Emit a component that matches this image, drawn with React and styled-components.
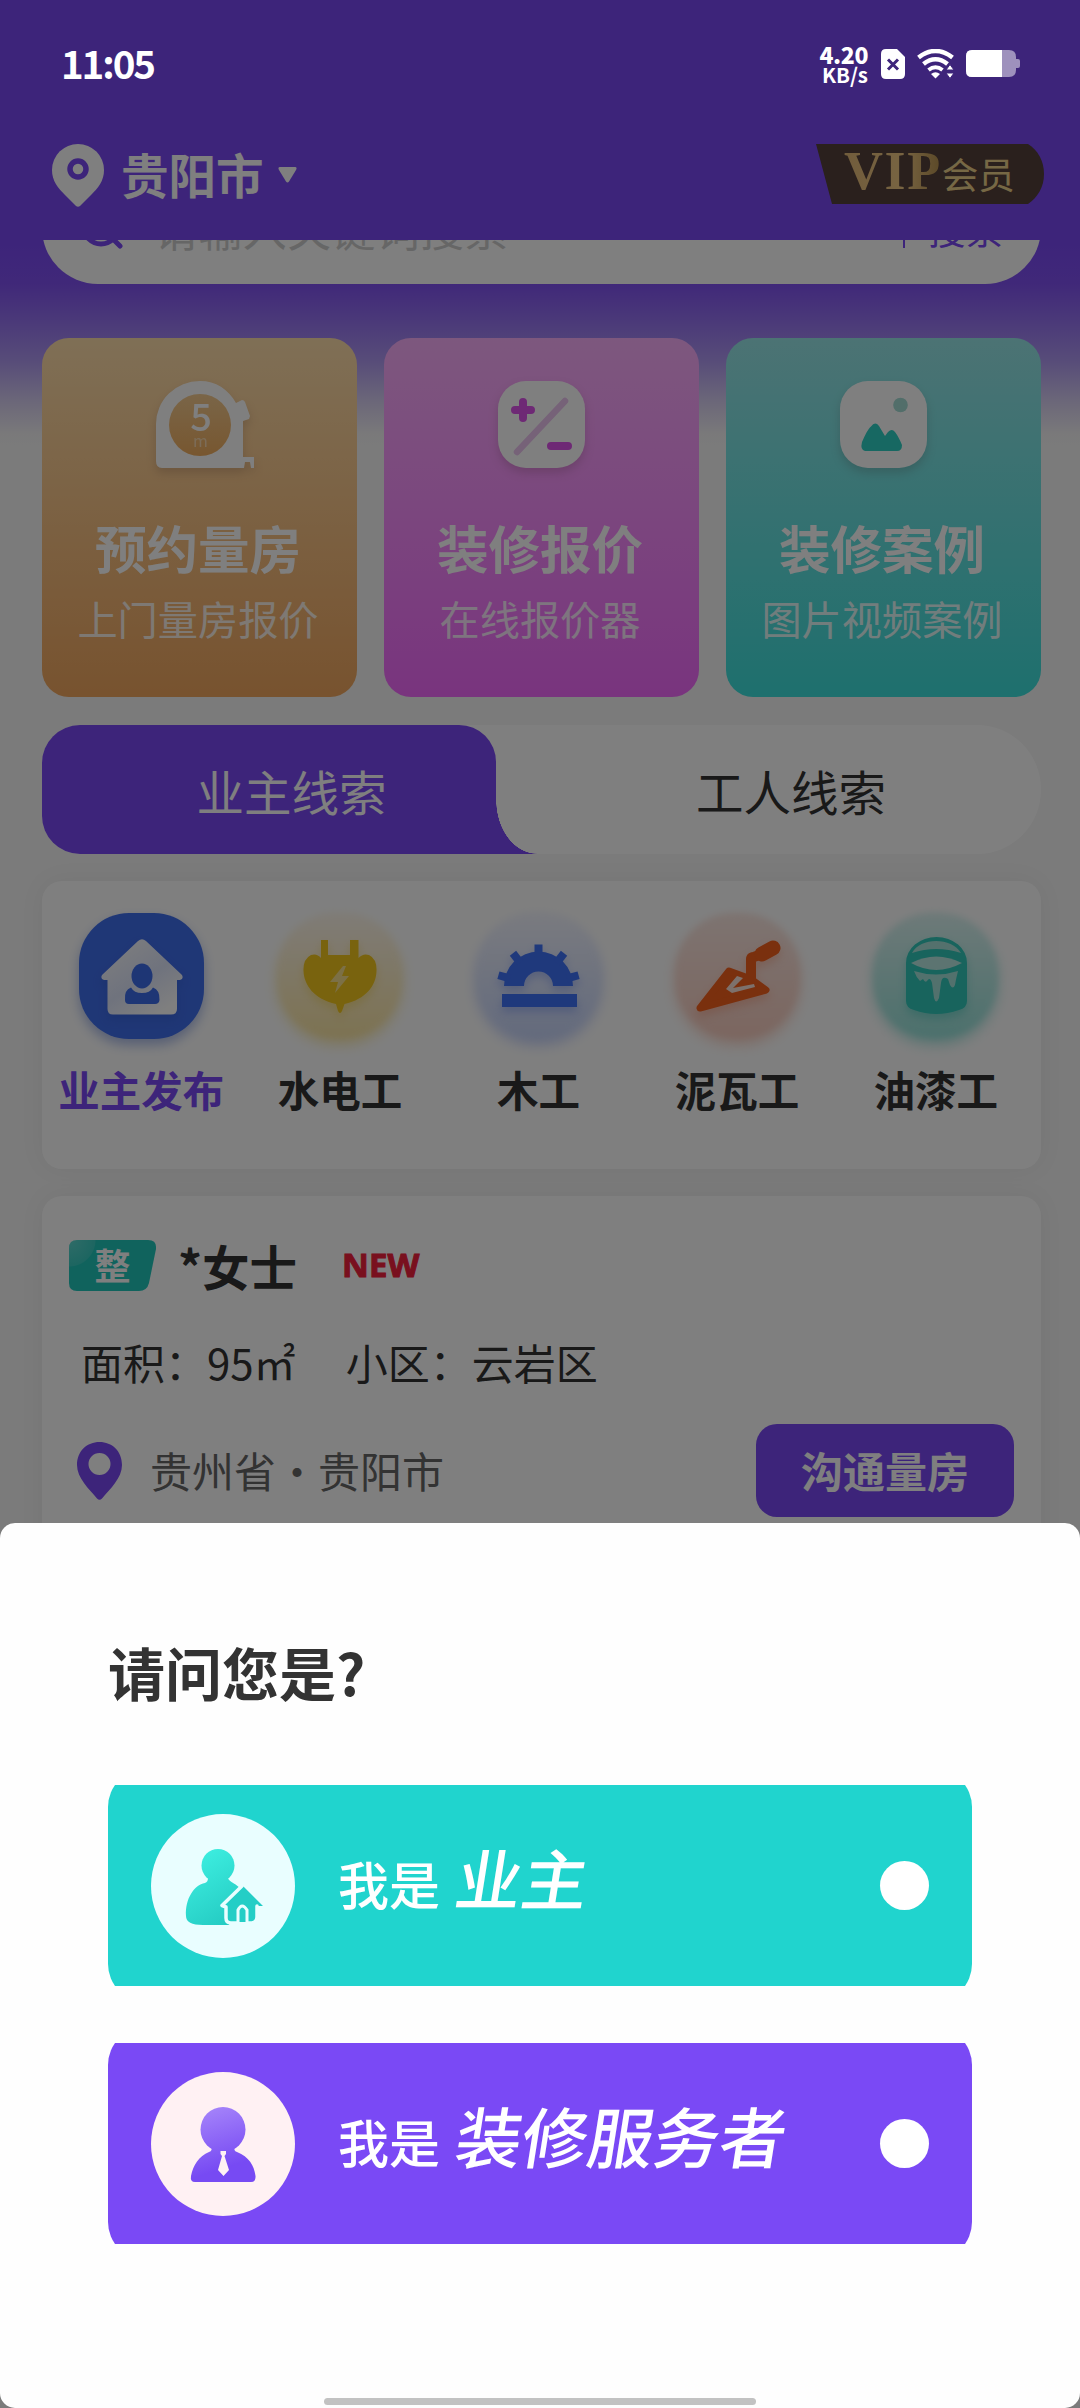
import styled, { createGlobalStyle, css } from "styled-components";

const PURPLE = "#7a48f5";

const GlobalStyle = createGlobalStyle`
  * {
    box-sizing: border-box;
  }

  body {
    margin: 0;
    font-family: "Noto Sans CJK SC", sans-serif;
    -webkit-font-smoothing: antialiased;
  }
`;

const Screen = styled.div`
  position: relative;
  width: 1080px;
  height: 2408px;
  overflow: hidden;
  background: #f6f6f6;
`;

/* header */

const Header = styled.header`
  height: 240px;
  padding: 110px 36px 0 52px;
  display: flex;
  align-items: center;
  justify-content: space-between;
  background: ${PURPLE};
  color: #fff;
`;

const City = styled.div`
  display: flex;
  align-items: center;
  font-size: 47.5px;
  font-weight: 700;
  line-height: 64px;

  svg:first-child {
    margin-right: 17px;
  }

  svg:last-child {
    margin: 0 0 0 14px;
  }
`;

const CityName = styled.span`
  margin-top: -3px;
`;

const VipBadge = styled.div`
  width: 228px;
  height: 60px;
  margin-bottom: 2px;
  padding-left: 28px;
  display: flex;
  align-items: center;
  background: #54403a;
  clip-path: path("M0 0 H212 C222 6 228 17 228 30 C228 43 222 53 212 60 H16 Z");
  color: #ecd08a;
  font-size: 36.5px;
  line-height: 60px;
`;

const VipLetters = styled.span`
  margin: -7px 0 0 0;
  font-family: "Liberation Serif", serif;
  font-size: 54px;
  font-weight: 700;
  letter-spacing: 1.6px;
  background: linear-gradient(90deg, #e2b978, #f0c884 60%, #b5904e);
  background-clip: text;
  color: transparent;
`;

/* scrolled page content */

const Content = styled.main`
  height: 1290px;
  overflow: hidden;
  background: linear-gradient(
    180deg,
    ${PURPLE} 0,
    #8151f3 44px,
    #9470f2 78px,
    #b09af2 122px,
    #d6cdf2 160px,
    #f4f3f5 194px,
    #f6f6f6 205px
  );
`;

const Scrolled = styled.div`
  margin-top: -68px;
  padding: 0 39px 0 42px;
`;

const SearchBar = styled.div`
  height: 112px;
  padding: 0 38px 0 42px;
  display: flex;
  align-items: center;
  border-radius: 56px;
  background: #fff;
  color: ${PURPLE};
`;

const Placeholder = styled.span`
  flex: 1;
  padding-left: 30px;
  color: #cdcdcd;
  font-size: 44.3px;
`;

const SearchAction = styled.span`
  padding-left: 23px;
  border-left: 2px solid ${PURPLE};
  font-size: 37.5px;
  line-height: 40px;
`;

const Entries = styled.div`
  margin-top: 54px;
  display: grid;
  grid-template-columns: repeat(3, 1fr);
  gap: 27px;
`;

const Entry = styled.div`
  height: 359px;
  padding-top: 43px;
  display: flex;
  flex-direction: column;
  align-items: center;
  border-radius: 27px;
  background: linear-gradient(180deg, ${({ $from }) => $from}, ${({ $to }) => $to});
  color: #fff;

  svg {
    overflow: visible;
    filter: drop-shadow(0 5px 5px rgba(80, 40, 40, 0.18));
  }
`;

const EntryTitle = styled.span`
  margin: 46px 3px 0 0;
  font-size: 51.5px;
  font-weight: 700;
  line-height: 66px;
`;

const EntryHint = styled.span`
  margin: 11px 3px 0 0;
  font-size: 40.2px;
  font-weight: 400;
  line-height: 54px;
  color: rgba(255, 255, 255, 0.86);
`;

const Tabs = styled.div`
  height: 129px;
  margin-top: 28px;
  display: flex;
  border-radius: 38px 64px 64px 38px;
  background: #fff;
`;

const Tab = styled.div`
  flex: 1;
  padding: 1px 0 0 45px;
  display: flex;
  align-items: center;
  justify-content: center;
  font-size: 47.5px;
  color: #333;

  ${({ $active }) =>
    $active &&
    css`
      position: relative;
      flex: 0 0 454px;
      border-radius: 38px 37px 0 38px;
      background: ${PURPLE};
      color: #fff;

      /* curved foot that runs under the next tab */
      &::after {
        content: "";
        position: absolute;
        left: 100%;
        bottom: 0;
        width: 41px;
        height: 54px;
        background: radial-gradient(
          ellipse 41px 54px at 100% 0,
          transparent 99%,
          ${PURPLE} 100%
        );
      }
    `}
`;

const Panel = styled.section`
  border-radius: 20px;
  background: #fff;
  box-shadow: 0 0 26px rgba(0, 0, 0, 0.05);
`;

const Trades = styled(Panel)`
  height: 288px;
  margin-top: 27px;
  padding: 32px 6px 0 0;
  display: flex;
`;

const Trade = styled.div`
  flex: 1 0 0;
  display: flex;
  flex-direction: column;
  align-items: center;
  font-size: 41.5px;
  font-weight: 700;
  line-height: 60px;
  white-space: nowrap;
  color: ${({ $active }) => ($active ? PURPLE : "#333")};
`;

const TradeTile = styled.div`
  position: relative;
  z-index: 0;
  width: 125px;
  height: 126px;
  margin-bottom: 20px;

  &::before {
    content: "";
    position: absolute;
    z-index: -1;
    inset: 0;
    border-radius: ${({ $soft }) => ($soft ? "60px" : "50px")};
    background: ${({ $fill }) => $fill};
    box-shadow: 0 6px 12px ${({ $glow }) => $glow};
    filter: ${({ $soft }) => ($soft ? "blur(3px)" : "none")};
  }

  svg {
    display: block;
    filter: drop-shadow(0 5px 4px ${({ $glow }) => $glow});
  }
`;

const Lead = styled(Panel)`
  height: 400px;
  margin-top: 27px;
  padding: 44px 27px 0;
`;

const LeadHead = styled.div`
  height: 51px;
  display: flex;
  align-items: center;
`;

const Kind = styled.span`
  width: 87px;
  height: 51px;
  clip-path: path(
    "M8 0 H79 Q88 0 87 9 L80 43 Q78 51 70 51 H8 Q0 51 0 43 V8 Q0 0 8 0 Z"
  );
  background: radial-gradient(circle at 0 0, #5fd8d0 0, #3accc2 26px, #20c6bb 27px);
  color: #fff;
  font-size: 36px;
  font-weight: 700;
  line-height: 49px;
  text-align: center;
`;

const LeadName = styled.span`
  margin-left: 22px;
  font-size: 47.5px;
  font-weight: 700;
  line-height: 51px;
  color: #333;
`;

const NewMark = styled.span`
  margin: -2px 0 0 45px;
  font-family: "Open Sans", sans-serif;
  font-size: 33px;
  font-weight: 700;
  line-height: 40px;
  -webkit-text-stroke: 1px #f2203c;
  color: #f2203c;
`;

const LeadFacts = styled.div`
  margin-top: 41px;
  padding-left: 12px;
  display: flex;
  gap: 50px;
  font-size: 42px;
  line-height: 60px;
  color: #333;
`;

const LeadFoot = styled.div`
  height: 93px;
  margin-top: 32px;
  padding-left: 8px;
  display: flex;
  align-items: center;
`;

const Place = styled.span`
  flex: 1;
  margin-top: -2px;
  padding-left: 28px;
  font-size: 42px;
  color: #666;
`;

const LeadButton = styled.button`
  width: 258px;
  height: 93px;
  padding: 0 0 2px;
  border: 0;
  border-radius: 21px;
  background: ${PURPLE};
  color: #fff;
  font-family: inherit;
  font-size: 42px;
  font-weight: 700;
`;

/* mask, status bar and bottom sheet */

const Mask = styled.div`
  position: absolute;
  inset: 0;
  display: flex;
  flex-direction: column;
  justify-content: space-between;
  background: rgba(0, 0, 0, 0.5);
`;

const StatusBar = styled.div`
  height: 128px;
  padding: 0 60px 0 61px;
  display: flex;
  align-items: center;
  color: #fff;
`;

const Clock = styled.span`
  flex: 1;
  margin-top: -5px;
  font-size: 38.5px;
  font-weight: 700;
  letter-spacing: -2.1px;
  line-height: 48px;
`;

const NetSpeed = styled.span`
  margin: -1px 13px 0 0;
  display: flex;
  flex-direction: column;
  align-items: flex-end;
  font-size: 20.5px;
  font-weight: 700;
  line-height: 20px;

  b {
    font-size: 23px;
    letter-spacing: -0.4px;
  }
`;

const StatusIcons = styled.span`
  display: flex;
  align-items: center;
  gap: 12px;
`;

const Sheet = styled.section`
  height: 885px;
  padding: 115px 108px 0;
  display: flex;
  flex-direction: column;
  border-radius: 15px;
  background: #fefefe;
`;

const SheetTitle = styled.h1`
  margin: 0 0 81px;
  font-size: 57px;
  font-weight: 700;
  line-height: 66px;
  color: #333;
`;

/* the rounded fill is taller than the card, so its corners come out cut */
const RoleCard = styled.div`
  position: relative;
  z-index: 0;
  height: 201px;
  margin-bottom: 57px;
  padding: 0 43px;
  display: flex;
  align-items: center;
  overflow: hidden;
  color: #fff;

  &::before {
    content: "";
    position: absolute;
    z-index: -1;
    inset: -16px 0;
    border-radius: 38px;
    background: ${({ $color }) => $color};
  }
`;

const Avatar = styled.div`
  width: 144px;
  height: 144px;
  margin-right: 43px;
  border-radius: 50%;
  background: ${({ $color }) => $color};
`;

const RoleText = styled.div`
  flex: 1;
  padding-bottom: 12px;
  display: flex;
  align-items: baseline;
  font-size: 51px;
  font-weight: 500;
  line-height: 90px;
`;

const RoleName = styled.span`
  margin: 0 0 0 17px;
  font-size: 66px;
  transform: skewX(-9deg);
`;

const Radio = styled.span`
  width: 49px;
  height: 49px;
  border-radius: 50%;
  background: #fff;
`;

const HomeBar = styled.div`
  width: 432px;
  height: 7px;
  margin: auto auto 3px;
  border-radius: 4px;
  background: #c2c2c2;
`;

/* drawings */

const TapeIcon = () => (
  <svg width="88" height="87" viewBox="0 0 88 87">
    <defs>
      <linearGradient id="tape" x1="0" y1="0" x2="0" y2="1">
        <stop offset="0" stopColor="#f4cb90" />
        <stop offset="1" stopColor="#f0ae60" />
      </linearGradient>
    </defs>
    <path
      d="M6 87Q0 87 0 80V43A44 43 0 0 1 44 0C60 0 72 8 80 22L86 19Q88 19 89 21L94 35L93 38L87 40V76H98V87H95L94 81H89L88 87Z"
      fill="#fff"
    />
    <circle cx="44" cy="44" r="31" fill="url(#tape)" />
    <text x="45" y="50" textAnchor="middle" fontSize="38" fontWeight="500" fill="#fff">
      5
    </text>
    <text x="44.5" y="66" textAnchor="middle" fontSize="16" fill="#f8d9b0">
      m
    </text>
  </svg>
);

const QuoteIcon = () => (
  <svg width="87" height="87" viewBox="0 0 87 87" fill="none" strokeLinecap="round">
    <rect width="87" height="87" rx="28" fill="#fff" />
    <path d="M19 71L67 20" stroke="#ecc4f0" strokeWidth="6.5" />
    <path d="M17 29H33M25 21V37M53 65H70" stroke="#dc52ea" strokeWidth="8" />
  </svg>
);

const CaseIcon = () => (
  <svg width="87" height="87" viewBox="0 0 87 87">
    <rect width="87" height="87" rx="28" fill="#fff" />
    <circle cx="60.5" cy="24" r="7.3" fill="#a4dcd4" />
    <path
      d="M25 70Q20 69 22 61C25 54 28 48 31 45.500Q35 40 39 45L45 55L48 51Q52 47 55 51C58 55 60 59 62 64Q62 70 57 70Z"
      fill="#2ed0c4"
    />
  </svg>
);

const HomeIcon = () => (
  <svg width="125" height="126" viewBox="0 0 125 126">
    <defs>
      <linearGradient id="house" x1="0" y1="0" x2="0.7" y2="1">
        <stop offset="0" stopColor="#fff" />
        <stop offset="0.6" stopColor="#dfe6fb" />
        <stop offset="1" stopColor="#fff" />
      </linearGradient>
    </defs>
    <path
      d="M59 28Q63 24.500 67 28L103 62Q105 66 101 67H98V96Q98 101.500 92 101.500H34Q28.500 101.500 28.500 96V67H25Q21 66 23 62Z"
      fill="url(#house)"
    />
    <ellipse cx="63" cy="63" rx="10.500" ry="12.500" fill="#3d6cea" />
    <path
      d="M46 87Q45 77 52 74.500Q55 80 63 80Q71 80 74 74.500Q81 77 80.500 87Q80 91 76 91H50Q46 91 46 87Z"
      fill="#3d6cea"
    />
  </svg>
);

const PlugIcon = () => (
  <svg width="125" height="126" viewBox="0 0 125 126">
    <path
      d="M44 27H51V42H73V27H81.500V45Q86 40 92 42Q100 46 99.500 58C99 73 89 86 67.500 91L65 98Q63 102 61 98L59 91C37 86 27 72 26.500 58Q26 46 34 42Q40 40 44 45Z"
      fill="#f2c61c"
    />
    <path d="M66 53L53 69H61L58 80L72 63H65L69 53Z" fill="#f8e08c" />
  </svg>
);

const SawIcon = () => (
  <svg width="125" height="126" viewBox="0 0 125 126" fill="#3f72f8">
    <path d="M28 73A34.500 34.500 0 0 1 97 73H77A14.500 14.500 0 0 0 48 73Z" />
    {[-75, -38, 0, 38, 75].map((angle) => (
      <rect
        key={angle}
        x="58.500"
        y="31.500"
        width="8"
        height="12"
        transform={`rotate(${angle} 62.500 73)`}
      />
    ))}
    <rect x="26" y="81" width="75" height="13" />
  </svg>
);

const TrowelIcon = () => (
  <svg width="125" height="126" viewBox="0 0 125 126" fill="none">
    <path
      d="M25 95L54 58L76 66L91 77Z"
      fill="#f4601c"
      stroke="#f4601c"
      strokeWidth="7"
      strokeLinejoin="round"
    />
    <path
      d="M76 70V46Q76 44 79 44L84 42"
      stroke="#f4601c"
      strokeWidth="10"
      strokeLinecap="round"
    />
    <path d="M87 41L98 35" stroke="#f4601c" strokeWidth="15" strokeLinecap="round" />
    <path d="M62 63L51 76L57 80L80 74L79 71L58 75L68 65Z" fill="#fbe2d8" />
  </svg>
);

const BucketIcon = () => (
  <svg width="125" height="126" viewBox="0 0 125 126">
    <path
      d="M33 50A30.500 26 0 0 1 94 50V88Q94 95 86 97Q63 105 41 97Q33 95 33 88Z"
      fill="#30c8ba"
    />
    <path d="M39 40C47 24 79 24 88 40Q63 32 39 40Z" fill="#a8e2da" />
    <path d="M38 50Q63 37 89 50Q63 64 38 50Z" fill="#b8e8e2" />
    <path
      d="M41 58Q63 65 85 58Q83 66 82 72Q80 77 77 72L75 66Q69 62 68 70L66 85Q63 92 61 85L59 70Q57 63 54 68Q52 70 50 66L47 68Q43 64 41 58Z"
      fill="#a4e2da"
    />
  </svg>
);

const OwnerIcon = () => (
  <svg width="144" height="144" viewBox="0 0 144 144">
    <defs>
      <linearGradient
        id="owner"
        gradientUnits="userSpaceOnUse"
        x1="45"
        y1="40"
        x2="90"
        y2="111"
      >
        <stop offset="0" stopColor="#3deee0" />
        <stop offset="1" stopColor="#22c8c0" />
      </linearGradient>
    </defs>
    <g fill="url(#owner)">
      <circle cx="67" cy="51.500" r="16.500" />
      <path d="M57 64H77C78 68 86 70 91 76L78 111H52Q35 111 35 102C34 85 43 71 54 69Q57 68 57 64Z" />
    </g>
    <path
      d="M91 71L71 91.500H75V104Q75 109 80 109H101Q106 108 106 103V92H112Z"
      fill="#24cec6"
    />
    <path
      d="M91 72L71 91.500L75 93V104Q75 109 80 109H101Q106 108 106 103V92"
      fill="none"
      stroke="#e9feff"
      strokeWidth="3.500"
      strokeLinecap="round"
      strokeLinejoin="round"
    />
    <path d="M87 108V96Q91 88 96 96V108" fill="#24cec6" stroke="#e9feff" strokeWidth="3" />
  </svg>
);

const WorkerIcon = () => (
  <svg width="144" height="144" viewBox="0 0 144 144">
    <defs>
      <linearGradient
        id="worker"
        gradientUnits="userSpaceOnUse"
        x1="58"
        y1="35"
        x2="82"
        y2="110"
      >
        <stop offset="0" stopColor="#a584fa" />
        <stop offset="0.8" stopColor="#774af3" />
      </linearGradient>
    </defs>
    <g fill="url(#worker)">
      <circle cx="72" cy="57.500" r="22.500" />
      <path d="M60 74H84Q82 79 86 80C98 85 103 93 104.500 104Q105 110 100 110H44Q39 110 40 104C42 93 48 84 58 80Q62 79 60 74Z" />
    </g>
    <path d="M69.500 79H75V82L73.500 84L78 98L72.500 104L67 98L71 84L69.500 82Z" fill="#fff2f3" />
  </svg>
);

const entries = [
  { title: "预约量房", hint: "上门量房报价", from: "#ffdfac", to: "#f0a65e", Icon: TapeIcon },
  { title: "装修报价", hint: "在线报价器", from: "#fbb0fc", to: "#f268fc", Icon: QuoteIcon },
  { title: "装修案例", hint: "图片视频案例", from: "#98e6e8", to: "#3ce0dc", Icon: CaseIcon },
];

const trades = [
  {
    name: "业主发布",
    active: true,
    fill: "#3f6eec",
    glow: "rgba(50, 90, 200, 0.4)",
    Icon: HomeIcon,
  },
  {
    name: "水电工",
    fill: "linear-gradient(#fff8ee, #fbe6a4)",
    glow: "rgba(240, 200, 50, 0.35)",
    Icon: PlugIcon,
  },
  {
    name: "木工",
    fill: "linear-gradient(#f4f6ff, #c8d6fb)",
    glow: "rgba(70, 110, 240, 0.3)",
    Icon: SawIcon,
  },
  {
    name: "泥瓦工",
    fill: "linear-gradient(#fbe8e2, #f8cdc0)",
    glow: "rgba(240, 100, 50, 0.25)",
    Icon: TrowelIcon,
  },
  {
    name: "油漆工",
    fill: "linear-gradient(#dcf4f2, #98e2da)",
    glow: "rgba(40, 190, 175, 0.35)",
    Icon: BucketIcon,
  },
];

const roles = [
  { name: "业主", color: "#20d4ce", avatar: "#e9feff", Icon: OwnerIcon },
  { name: "装修服务者", color: "#7a49f5", avatar: "#fff1f3", Icon: WorkerIcon },
];

const App = () => (
  <Screen>
    <GlobalStyle />
    <Header>
      <City>
        <svg width="52" height="63" viewBox="0 0 52 63">
          <path
            d="M26 0A26 26 0 0 1 52 26C52 37 46 44 39 51L28 62Q26 63.500 24 62L13 51C6 44 0 37 0 26A26 26 0 0 1 26 0Z"
            fill="#fff"
          />
          <circle cx="26" cy="25" r="8" fill="none" stroke={PURPLE} strokeWidth="5.500" />
        </svg>
        <CityName>贵阳市</CityName>
        <svg width="19" height="16" viewBox="0 0 19 16">
          <path d="M2 0H17Q19.500 0 18 3L11 14.500Q9.500 16.500 8 14.500L1 3Q-0.500 0 2 0Z" fill="#fff" />
        </svg>
      </City>
      <VipBadge>
        <VipLetters>VIP</VipLetters>会员
      </VipBadge>
    </Header>

    <Content>
      <Scrolled>
        <SearchBar>
          <svg width="40" height="42" viewBox="0 0 40 42" fill="none" stroke={PURPLE}>
            <circle cx="17" cy="20" r="17" strokeWidth="5" />
            <path d="M29 32L36 39" strokeWidth="5" strokeLinecap="round" />
          </svg>
          <Placeholder>请输入关键词搜索</Placeholder>
          <SearchAction>搜索</SearchAction>
        </SearchBar>

        <Entries>
          {entries.map(({ title, hint, from, to, Icon }) => (
            <Entry key={title} $from={from} $to={to}>
              <Icon />
              <EntryTitle>{title}</EntryTitle>
              <EntryHint>{hint}</EntryHint>
            </Entry>
          ))}
        </Entries>

        <Tabs>
          <Tab $active>业主线索</Tab>
          <Tab>工人线索</Tab>
        </Tabs>

        <Trades>
          {trades.map(({ name, active, fill, glow, Icon }) => (
            <Trade key={name} $active={active}>
              <TradeTile $fill={fill} $glow={glow} $soft={!active}>
                <Icon />
              </TradeTile>
              {name}
            </Trade>
          ))}
        </Trades>

        <Lead>
          <LeadHead>
            <Kind>整</Kind>
            <LeadName>*女士</LeadName>
            <NewMark>NEW</NewMark>
          </LeadHead>
          <LeadFacts>
            <span>面积：95㎡</span>
            <span>小区：云岩区</span>
          </LeadFacts>
          <LeadFoot>
            <svg width="45" height="58" viewBox="0 0 45 58">
              <path
                d="M22.500 0C35 0 45 9 45 23C45 36 33 47 25 56.500Q22.500 59 20 56.500C12 47 0 36 0 23C0 9 10 0 22.500 0ZM22.500 11A11 11 0 0 0 22.500 33A11 11 0 0 0 22.500 11Z"
                fill={PURPLE}
              />
            </svg>
            <Place>贵州省・贵阳市</Place>
            <LeadButton>沟通量房</LeadButton>
          </LeadFoot>
        </Lead>
      </Scrolled>
    </Content>

    <Mask>
      <StatusBar>
        <Clock>11:05</Clock>
        <NetSpeed>
          <b>4.20</b>
          KB/s
        </NetSpeed>
        <StatusIcons>
          <svg width="24" height="30" viewBox="0 0 24 30">
            <path
              d="M5 0H16L24 8V25Q24 30 19 30H5Q0 30 0 25V5Q0 0 5 0Z"
              fill="#fff"
            />
            <path d="M7 10.500L17 20.500M17 10.500L7 20.500" stroke="#3d247b" strokeWidth="3" />
          </svg>
          <svg width="37" height="30" viewBox="0 0 37 30" fill="none" stroke="#fff">
            <path d="M1.500 8.500Q18.500 -4.500 35.500 8.500" strokeWidth="4.500" />
            <path d="M6.500 15Q18.500 5.500 30.500 15" strokeWidth="4.500" />
            <path d="M11.500 21Q18.500 15.500 25.500 21" strokeWidth="4" />
            <path d="M14 25Q18.500 21.500 23 25L18.500 29.500Z" fill="#fff" stroke="none" />
            <path
              d="M33 15.500L37 21H29ZM33 29.500L37 24H29Z"
              fill="#fff"
              stroke="#3d247b"
              strokeWidth="1"
            />
          </svg>
          <svg width="54" height="28" viewBox="0 0 54 28">
            <path
              d="M6 0H43Q50 0 50 7V9H52Q54 9 54 11V16Q54 18 52 18H50V20Q50 27 43 27H6Q0 27 0 21V6Q0 0 6 0Z"
              fill="#9e91bd"
            />
            <path d="M6 0H36V27H6Q0 27 0 21V6Q0 0 6 0Z" fill="#fff" />
          </svg>
        </StatusIcons>
      </StatusBar>

      <Sheet>
        <SheetTitle>请问您是?</SheetTitle>
        {roles.map(({ name, color, avatar, Icon }) => (
          <RoleCard key={name} $color={color}>
            <Avatar $color={avatar}>
              <Icon />
            </Avatar>
            <RoleText>
              我是
              <RoleName>{name}</RoleName>
            </RoleText>
            <Radio />
          </RoleCard>
        ))}
        <HomeBar />
      </Sheet>
    </Mask>
  </Screen>
);

export default App;
